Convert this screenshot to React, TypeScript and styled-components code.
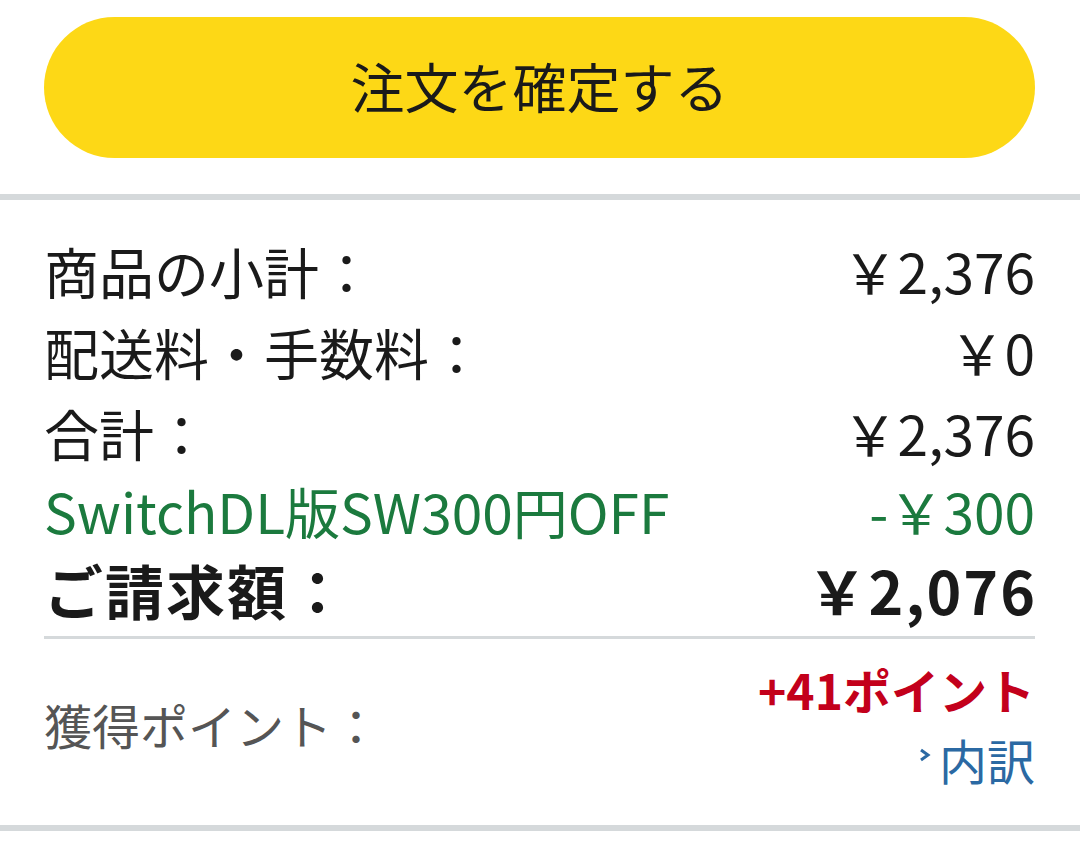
import React from "react";
import styled, { createGlobalStyle } from "styled-components";

const GlobalStyle = createGlobalStyle`
  html, body {
    margin: 0;
    padding: 0;
    background: #ffffff;
  }
  body {
    font-family: "Noto Sans CJK JP", "Noto Sans", sans-serif;
    color: #1a1a1a;
  }
`;

const Page = styled.div`
  width: 1080px;
  display: flex;
  flex-direction: column;
`;

const ButtonArea = styled.div`
  padding: 17px 45px 36px 44px;
`;

const ConfirmButton = styled.button`
  width: 100%;
  height: 141px;
  border: none;
  border-radius: 71px;
  background: #fdd816;
  color: #1a1a1a;
  font-family: "Noto Sans CJK JP", sans-serif;
  font-size: 54px;
  font-weight: 400;
  display: flex;
  align-items: center;
  justify-content: center;
  padding: 0 0 4px;
  cursor: pointer;
`;

const Separator = styled.div`
  height: 6px;
  background: #d5d9db;
`;

const Summary = styled.div`
  padding: 30px 45px 0 44px;
  display: flex;
  flex-direction: column;
`;

type Tone = "normal" | "discount" | "total";

const Row = styled.div<{ $tone: Tone }>`
  display: flex;
  justify-content: space-between;
  align-items: center;
  font-size: ${(p) => (p.$tone === "total" ? "59px" : "55px")};
  letter-spacing: ${(p) => (p.$tone === "total" ? "2px" : "0")};
  line-height: ${(p) =>
    p.$tone === "total" ? "86px" : p.$tone === "discount" ? "74px" : "81px"};
  white-space: nowrap;
  color: ${(p) => (p.$tone === "discount" ? "#1b7a3e" : "#1a1a1a")};
  font-weight: ${(p) => (p.$tone === "total" ? 700 : 400)};
`;

const Amount = styled.span<{ $tone: Tone }>`
  margin-right: ${(p) => (p.$tone === "total" ? "-2px" : "0")};
`;

const Divider = styled.div`
  height: 3px;
  background: #d5d9db;
  margin-top: 3px;
`;

const Points = styled.div`
  display: flex;
  justify-content: space-between;
  align-items: center;
  padding: 15px 0 31px;
`;

const PointsLabel = styled.span`
  font-size: 48px;
  color: #555555;
`;

const PointsRight = styled.div`
  display: flex;
  flex-direction: column;
  align-items: flex-end;
`;

const PointsValue = styled.span`
  font-size: 48px;
  line-height: 70px;
  font-weight: 700;
  color: #c3001b;
`;

const BreakdownLink = styled.a`
  display: flex;
  align-items: center;
  gap: 8px;
  font-size: 48px;
  line-height: 70px;
  color: #2b69a3;
  text-decoration: none;
`;

const ChevronIcon = styled.svg`
  margin-bottom: 8px;
`;

const Chevron = () => (
  <ChevronIcon width="13" height="14" viewBox="0 0 13 14" aria-hidden="true">
    <path d="M3 2 L10 7 L3 12" fill="none" stroke="#2b69a3" strokeWidth="3" />
  </ChevronIcon>
);

const rows: { label: string; value: string; tone: Tone }[] = [
  { label: "商品の小計：", value: "￥2,376", tone: "normal" },
  { label: "配送料・手数料：", value: "￥0", tone: "normal" },
  { label: "合計：", value: "￥2,376", tone: "normal" },
  { label: "SwitchDL版SW300円OFF", value: "-￥300", tone: "discount" },
  { label: "ご請求額：", value: "￥2,076", tone: "total" },
];

export default function App() {
  return (
    <Page>
      <GlobalStyle />
      <ButtonArea>
        <ConfirmButton>注文を確定する</ConfirmButton>
      </ButtonArea>
      <Separator />
      <Summary>
        {rows.map((r) => (
          <Row key={r.label} $tone={r.tone}>
            <span>{r.label}</span>
            <Amount $tone={r.tone}>{r.value}</Amount>
          </Row>
        ))}
        <Divider />
        <Points>
          <PointsLabel>獲得ポイント：</PointsLabel>
          <PointsRight>
            <PointsValue>+41ポイント</PointsValue>
            <BreakdownLink href="#">
              <Chevron />
              内訳
            </BreakdownLink>
          </PointsRight>
        </Points>
      </Summary>
      <Separator />
    </Page>
  );
}
